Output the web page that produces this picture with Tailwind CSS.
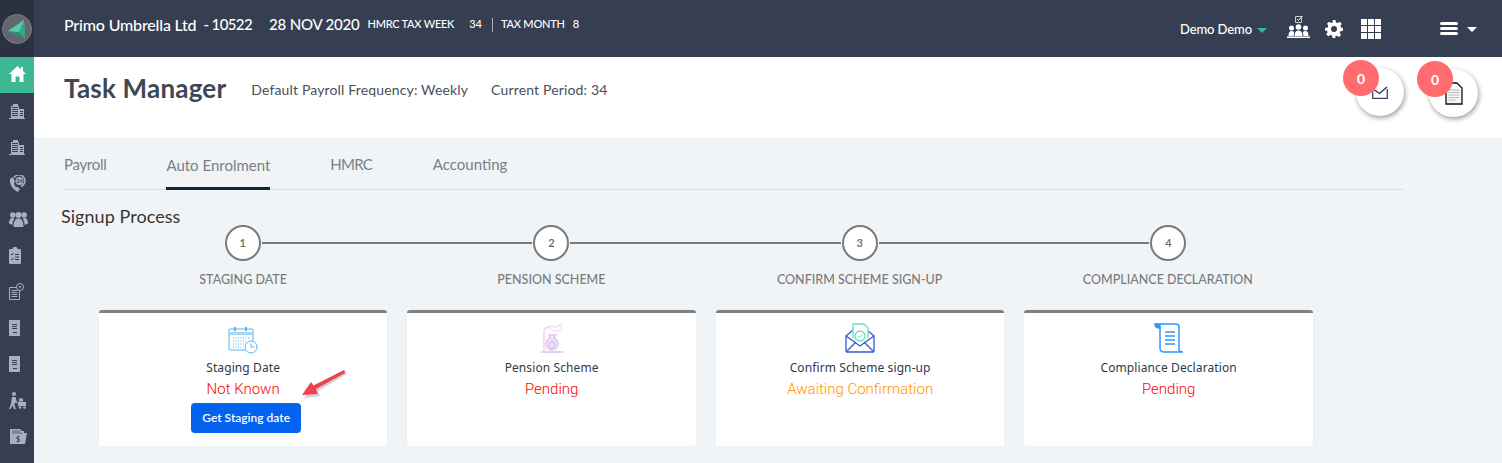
<!DOCTYPE html>
<html lang="en">
<head>
    <meta charset="UTF-8">
    <meta name="viewport" content="width=device-width, initial-scale=1.0">
    <title>Task Manager</title>
    <script src="https://cdn.jsdelivr.net/npm/@tailwindcss/browser@4"></script>
</head>
<body class="bg-[#f0f4f7] font-['Lato',sans-serif] overflow-hidden">
<div class="flex h-[463px] w-[1502px] overflow-hidden">

    <!-- sidebar -->
    <aside class="w-[34px] shrink-0 bg-[#353f51] flex flex-col">
        <div class="w-full h-[57px] bg-[#2a3140] flex items-center justify-center">
            <div class="w-[30px] h-[30px] shrink-0 rounded-full bg-[#62666f] border border-[#7a7d85] flex items-center justify-center">
                <svg width="20" height="20" viewBox="0 0 20 20"><path d="M1 12 L17 1 L18 19 Z" fill="#3fb894"/><path d="M17 1 L12 13 L18 19 Z" fill="#36a587"/><path d="M1 12 L12 13 L18 19 Z" fill="#2a8f75"/><path d="M1 12 L17 1 L12 13 Z" fill="#52cba6"/></svg>
            </div>
        </div>
        <div class="w-full h-[36px] bg-[#3eb795] flex items-center pl-[9px] pb-[2px]">
            <svg width="17" height="16" viewBox="0 0 17 16" fill="#fff"><path d="M8.500 0 L12 3.200 V1 H14 V5 L17 8 H14.500 V16 H10.500 V10.500 H6.500 V16 H2.500 V8 H0 Z"/></svg>
        </div>
        <div class="h-[36px] flex items-center pl-[9px]">
            <svg width="16" height="16" viewBox="0 0 16 16"><path d="M2 15 V3 H4 V1 H9 V3 H10 V6 H15 V15 Z" fill="#a9afbd"/><path d="M3 4.500h6M3 6.500h6M3 8.500h6M3 10.500h6M3 12.500h6M11 8.500h3M11 10.500h3M11 12.500h3" stroke="#353f51"/><path d="M0 15.500h16" stroke="#a9afbd"/></svg>
        </div>
        <div class="h-[36px] flex items-center pl-[9px]">
            <svg width="16" height="16" viewBox="0 0 16 16"><path d="M2 15 V3 H4 V1 H9 V3 H10 V6 H15 V15 Z" fill="#a9afbd"/><path d="M3 4.500h6M3 6.500h6M3 8.500h6M3 10.500h6M3 12.500h6M11 8.500h3M11 10.500h3M11 12.500h3" stroke="#353f51"/><path d="M0 15.500h16" stroke="#a9afbd"/></svg>
        </div>
        <div class="h-[36px] flex items-center pl-[9px]">
            <svg width="17" height="17" viewBox="0 0 17 17" fill="none"><path d="M1 4 C0 9 4 15 9 17 L11 14 L8 11.500 L7 12.500 C6 11 5 9 5 8 L6 7 L4 2 Z" fill="#a9afbd"/><path d="M5 2.500 A6 6 0 1 1 12 11.500" stroke="#a9afbd" stroke-width="1.500"/><circle cx="10.500" cy="6" r="4" fill="#a9afbd"/><text x="10.500" y="8" font-size="5.500" font-weight="700" fill="#353f51" text-anchor="middle">24</text></svg>
        </div>
        <div class="h-[36px] flex items-center pl-[9px]">
            <svg width="19" height="16" viewBox="0 0 19 16" fill="#a9afbd"><circle cx="9.500" cy="4" r="3"/><circle cx="3.800" cy="4" r="2.800"/><circle cx="15.200" cy="4" r="2.800"/><path d="M4.500 16 C4.500 9 7 7.500 9.500 7.500 C12 7.500 14.500 9 14.500 16 Z"/><path d="M0 12.500 C0 8.500 1.500 7 3.500 7 L5.500 7.500 C4 9.500 3.500 11 3.500 14 Z M19 12.500 C19 8.500 17.500 7 15.500 7 L13.500 7.500 C15 9.500 15.500 11 15.500 14 Z"/></svg>
        </div>
        <div class="h-[36px] flex items-center pl-[9px]">
            <svg width="12" height="17" viewBox="0 0 12 17"><path d="M1 2 H3.500 L4.500 0 H7.500 L8.500 2 H11 Q12 2 12 3 V16 Q12 17 11 17 H1 Q0 17 0 16 V3 Q0 2 1 2 Z" fill="#a9afbd"/><path d="M2 7l1 1 1.500-2M2 12l1 1 1.500-2M6 7.500h4M6 10h4M6 12.500h4" stroke="#353f51" fill="none"/></svg>
        </div>
        <div class="h-[37px] flex items-center pl-[9px]">
            <svg width="15" height="17" viewBox="0 0 15 17" fill="none"><path d="M.500 4.500 H10.500 V16.500 H.500 Z" stroke="#a9afbd"/><path d="M2.500 7.500h6M2.500 9.500h6M2.500 11.500h6M2.500 13.500h6" stroke="#a9afbd"/><circle cx="11" cy="4" r="3.500" fill="#353f51" stroke="#a9afbd"/><circle cx="11" cy="4" r="1" fill="#a9afbd"/></svg>
        </div>
        <div class="h-[36px] flex items-center pl-[9px]">
            <svg width="11" height="16" viewBox="0 0 11 16"><path d="M0 0 H11 V16 H0 Z" fill="#a9afbd"/><path d="M3 4.500h5M3 6.500h5M3 8.500h5M4 12.500h4" stroke="#353f51"/></svg>
        </div>
        <div class="h-[36px] flex items-center pl-[9px]">
            <svg width="11" height="16" viewBox="0 0 11 16"><path d="M0 0 H11 V16 H0 Z" fill="#a9afbd"/><path d="M3 4.500h5M3 6.500h5M3 8.500h5M4 12.500h4" stroke="#353f51"/></svg>
        </div>
        <div class="h-[36px] flex items-center pl-[9px]">
            <svg width="17" height="17" viewBox="0 0 17 17" fill="#a9afbd"><circle cx="5" cy="2" r="2"/><path d="M3 5h3.500l1 4 1 1v1.500L6 10.500l-.5 2.500L7 17H5l-1.500-3.500L1.500 17H0l2-5.500z"/><path d="M10 6.500h4v3h-4zM9 10h8v4H9z"/><circle cx="11" cy="15.500" r="1.300"/><circle cx="15.500" cy="15.500" r="1.300"/></svg>
        </div>
        <div class="h-[36px] flex items-center pl-[9px]">
            <svg width="18" height="16" viewBox="0 0 18 16"><path d="M1 1 H11 L13 3 L15 3 L15 5 H18 L16 16 H1 Z" fill="#a9afbd"/><path d="M3 3h8M3 5h10" stroke="#353f51" stroke-width=".7"/><text x="9" y="13.500" font-size="7" font-weight="700" fill="#353f51" text-anchor="middle">$</text></svg>
        </div>
    </aside>

    <div class="flex-1 min-w-0 flex flex-col">
        <!-- top bar -->
        <header class="h-[57px] shrink-0 bg-[#353f51] text-white flex items-center pl-[30px] pb-[8px]">
            <span class="text-[16px] font-medium tracking-[-0.17px] whitespace-pre">Primo Umbrella Ltd</span>
            <span class="ml-[7px] text-[15px] font-medium tracking-[-0.6px] whitespace-pre">- 10522</span>
            <span class="ml-[17px] text-[15px] font-medium tracking-[-0.2px] whitespace-pre">28 NOV 2020</span>
            <span class="ml-[8px] text-[11px] font-medium tracking-[-0.25px] whitespace-pre">HMRC TAX WEEK</span>
            <span class="ml-[15px] text-[11px] font-medium">34</span>
            <span class="ml-[10px] w-px h-[14px] bg-[#aab0bb]"></span>
            <span class="ml-[8px] text-[11px] font-medium tracking-[-0.2px]">TAX MONTH</span>
            <span class="ml-[8px] text-[11px] font-medium">8</span>
            <div class="ml-auto flex items-center pr-[25px] pt-[10px]">
                <span class="text-[13px] font-medium tracking-[-0.1px]">Demo Demo</span>
                <span class="ml-[5px] mt-[2px] w-0 h-0 border-x-[5px] border-x-transparent border-t-[5px] border-t-[#3eb795]"></span>
                <svg class="ml-[20px] -mt-[6px]" width="23" height="23" viewBox="0 0 23 23" fill="#fff"><path d="M8.500 1.500h6v6h-6z" fill="none" stroke="#c9ccd2"/><path d="M10 4l1.500 1.500L15.500 1" fill="none" stroke="#fff"/><circle cx="11.500" cy="12" r="2.800"/><circle cx="4.500" cy="13" r="2.500"/><circle cx="18.500" cy="13" r="2.500"/><path d="M7.500 21q0-5.500 4-5.500t4 5.500zM1.500 21q0-5 3-5t2.500 2l-.500 3zM21.500 21q0-5-3-5t-2.500 2l.500 3zM0 21.500h23V23H0z"/></svg>
                <svg class="ml-[15px] -mt-[2px]" width="18" height="18" viewBox="0 0 24 24" fill="#fff"><path fill-rule="evenodd" d="M10 0h4l.6 3.200 2.300.9L19.600 2.300l2.800 2.800-1.800 2.700.9 2.300L24 10.700v3.600l-3.500.6-.9 2.300 1.800 2.700-2.800 2.800-2.700-1.800-2.300.9L14 24h-4l-.6-3.200-2.300-.9-2.700 1.800-2.800-2.800 1.800-2.700-.9-2.300L0 14.300v-3.600l3.500-.6.9-2.300-1.800-2.700 2.800-2.800 2.700 1.800 2.300-.9zM12 8a4 4 0 1 0 0 8 4 4 0 0 0 0-8z"/></svg>
                <div class="ml-[18px] -mt-[2px] grid grid-cols-3 gap-[1px] w-[20px] h-[20px]">
                    <span class="bg-white"></span><span class="bg-white"></span><span class="bg-white"></span>
                    <span class="bg-white"></span><span class="bg-white"></span><span class="bg-white"></span>
                    <span class="bg-white"></span><span class="bg-white"></span><span class="bg-white"></span>
                </div>
                <div class="ml-[59px] -mt-[3px] flex flex-col gap-[2px] w-[18px]">
                    <span class="h-[3px] bg-white rounded-sm"></span>
                    <span class="h-[3px] bg-white rounded-sm"></span>
                    <span class="h-[3px] bg-white rounded-sm"></span>
                </div>
                <span class="ml-[9px] -mt-[1px] w-0 h-0 border-x-[5px] border-x-transparent border-t-[5px] border-t-white"></span>
            </div>
        </header>

        <!-- page title -->
        <div class="h-[82px] shrink-0 bg-white border-b border-[#e8ebef] flex items-start pl-[30px] pt-[14px]">
            <h1 class="text-[26px] leading-[34px] font-bold text-[#3f4654] tracking-[0.2px]">Task Manager</h1>
            <span class="ml-[25px] mt-[10px] text-[14px] leading-[18px] tracking-[0.15px] text-[#4a4f5a]">Default Payroll Frequency: Weekly</span>
            <span class="ml-[23px] mt-[10px] text-[14px] leading-[18px] tracking-[0.15px] text-[#4a4f5a]">Current Period: 34</span>
            <div class="ml-auto flex pr-[24px] gap-[25px] -mt-[3px]">
                <div class="relative w-[48px] h-[48px] rounded-full bg-white shadow-[1px_2px_5px_rgba(0,0,0,0.4)] flex items-center justify-center">
                    <svg width="16" height="13" viewBox="0 0 16 13" fill="none"><path d="M.700 3v9.300h14.600V3" stroke="#3b4a66" stroke-width="1.300"/><path d="M1 3l6.500 4.500L15 1" stroke="#26324a" stroke-width="1.300"/></svg>
                    <span class="absolute -left-[13px] -top-[8px] w-[36px] h-[36px] rounded-full bg-[#ff6b6e] text-white text-[14px] font-bold flex items-center justify-center">0</span>
                </div>
                <div class="relative mt-[1px] w-[49px] h-[48px] rounded-full bg-white shadow-[1px_2px_5px_rgba(0,0,0,0.4)] flex items-center justify-center">
                    <svg width="18" height="23" viewBox="0 0 18 23" fill="none"><path d="M1 1h11l5 5v16H1z" fill="#f6f6f6" stroke="#111" stroke-width="1.300"/><path d="M3.500 8h11M3.500 10.500h11M3.500 13h11M3.500 15.500h11M3.500 18h7" stroke="#bbb"/></svg>
                    <span class="absolute -left-[12px] -top-[8px] w-[36px] h-[36px] rounded-full bg-[#ff6b6e] text-white text-[14px] font-bold flex items-center justify-center">0</span>
                </div>
            </div>
        </div>

        <!-- tabs -->
        <nav class="ml-[30px] w-[1340px] h-[51px] shrink-0 border-b border-[#dcdfe3] flex text-[15px] text-[#7b7e85]">
            <a class="h-full flex items-center pt-[1px] tracking-[-0.3px]">Payroll</a>
            <a class="ml-[60px] h-[51px] flex items-center pt-[4px] border-b-[3px] border-[#0e2a38] box-border">Auto Enrolment</a>
            <a class="ml-[60px] h-full flex items-center pt-[1px] tracking-[-0.8px]">HMRC</a>
            <a class="ml-[61px] h-full flex items-center pt-[1px]">Accounting</a>
        </nav>

        <!-- signup process -->
        <section class="relative">
            <h2 class="pl-[27px] pt-[15px] h-[35px] text-[18px] leading-[22px] tracking-[0.05px] text-[#3a3430]">Signup Process</h2>
            <div class="ml-[55px] w-[1233px] grid grid-cols-4">
                <div class="flex flex-col items-center">
                    <div class="w-full flex items-center">
                        <span class="flex-1"></span>
                        <span class="w-[36px] h-[36px] rounded-full border-2 border-[#7a7a7a] bg-white text-[11px] font-semibold text-[#666] flex items-center justify-center">1</span>
                        <span class="flex-1 h-[2px] bg-[#7a7a7a] ml-[1px]"></span>
                    </div>
                    <span class="mt-[10px] text-[12.500px] leading-[18px] font-medium text-[#7b7b7b]">STAGING DATE</span>
                </div>
                <div class="flex flex-col items-center">
                    <div class="w-full flex items-center">
                        <span class="flex-1 h-[2px] bg-[#7a7a7a] mr-[1px]"></span>
                        <span class="w-[36px] h-[36px] rounded-full border-2 border-[#7a7a7a] bg-white text-[11px] font-semibold text-[#666] flex items-center justify-center">2</span>
                        <span class="flex-1 h-[2px] bg-[#7a7a7a] ml-[1px]"></span>
                    </div>
                    <span class="mt-[10px] text-[12.500px] leading-[18px] font-medium text-[#7b7b7b]">PENSION SCHEME</span>
                </div>
                <div class="flex flex-col items-center">
                    <div class="w-full flex items-center">
                        <span class="flex-1 h-[2px] bg-[#7a7a7a] mr-[1px]"></span>
                        <span class="w-[36px] h-[36px] rounded-full border-2 border-[#7a7a7a] bg-white text-[11px] font-semibold text-[#666] flex items-center justify-center">3</span>
                        <span class="flex-1 h-[2px] bg-[#7a7a7a] ml-[1px]"></span>
                    </div>
                    <span class="mt-[10px] text-[12.500px] leading-[18px] font-medium text-[#7b7b7b]">CONFIRM SCHEME SIGN-UP</span>
                </div>
                <div class="flex flex-col items-center">
                    <div class="w-full flex items-center">
                        <span class="flex-1 h-[2px] bg-[#7a7a7a] mr-[1px]"></span>
                        <span class="w-[36px] h-[36px] rounded-full border-2 border-[#7a7a7a] bg-white text-[11px] font-semibold text-[#666] flex items-center justify-center">4</span>
                        <span class="flex-1"></span>
                    </div>
                    <span class="mt-[10px] text-[12.500px] leading-[18px] font-medium text-[#7b7b7b]">COMPLIANCE DECLARATION</span>
                </div>
            </div>

            <div class="ml-[64.900px] mt-[21px] w-[1214px] grid grid-cols-4 gap-[20px]">
                <div class="relative h-[136px] bg-white rounded-[3px] border-t-[3px] border-[#808080] flex flex-col items-center pt-[13px] shadow-[0_0_3px_rgba(0,0,0,0.04)]">
                    <svg width="30" height="28" viewBox="0 0 30 28" fill="none" stroke="#5cb0ee"><rect x="1" y="3" width="24" height="21" rx="1"/><path d="M1 7.500h24" stroke-width="3" stroke="#a9d6f6"/><path d="M7 1v4M18 1v4" stroke-width="2"/><path d="M5 12h16M5 15h13M5 18h11M5 21h10" stroke-dasharray="1 1.500"/><circle cx="23" cy="21" r="6" fill="#fff"/><path d="M23 17.500V21h3.500"/></svg>
                    <p class="mt-[5px] font-['Noto_Sans',sans-serif] text-[12px] leading-[18px] tracking-[0.1px] text-[#333a47]">Staging Date</p>
                    <p class="mt-[2px] font-['Roboto',sans-serif] font-light text-[15px] leading-[20px] text-[#ff0000]">Not Known</p>
                    <button class="mt-[4px] ml-[6px] w-[110px] h-[30px] rounded-[4px] bg-[#0362ee] text-white text-[12px] font-semibold">Get Staging date</button>
                    <svg class="absolute left-[200px] top-[56px]" width="50" height="38" viewBox="0 0 50 38" fill="none"><path d="M46 3 L17 20 L19 25 L3 27 L13 14 L15 18 L44 1 Z" fill="#000" fill-opacity=".18" transform="translate(2 2)"/><path d="M45 1 Q47 3 45 4.500 L17 20 L18.500 25 L3 26 L12 13 L14.500 16.500 Z" fill="#ee4250"/></svg>
                </div>
                <div class="h-[136px] bg-white rounded-[3px] border-t-[3px] border-[#808080] flex flex-col items-center pt-[10px] shadow-[0_0_3px_rgba(0,0,0,0.04)]">
                    <svg width="22" height="30" viewBox="0 0 22 30" fill="none" stroke="#dcc3f2" stroke-width="1.300"><path d="M0 29h22" stroke-width="1.600"/><path d="M3 29V9c0-4 2-5 6-5" stroke="#f6dcea" stroke-width="2"/><path d="M9 3l6 1 5-3 1 6-6 1-6-2z" stroke="#f6dcea"/><path d="M8 12h7l-2 3c3 1 4 4 4 6 0 3-2 6-6 6s-6-3-6-6c0-2 1-5 4-6z" fill="#efe3fa"/><circle cx="11" cy="22" r="3"/></svg>
                    <p class="mt-[6px] font-['Noto_Sans',sans-serif] text-[12px] leading-[18px] tracking-[0.1px] text-[#333a47]">Pension Scheme</p>
                    <p class="mt-[2px] font-['Roboto',sans-serif] font-light text-[15px] leading-[20px] text-[#ff0000]">Pending</p>
                </div>
                <div class="h-[136px] bg-white rounded-[3px] border-t-[3px] border-[#808080] flex flex-col items-center pt-[10px] shadow-[0_0_3px_rgba(0,0,0,0.04)]">
                    <svg width="30" height="30" viewBox="0 0 30 30" fill="none"><path d="M1 13 L8 7 M29 13 L22 7 M1 13 V28 Q1 29 2 29 H28 Q29 29 29 28 V13 L15 23 Z M2 28 L11 19 M28 28 L19 19" stroke="#2f5fd6" stroke-width="1.300"/><path d="M8 15V1h11l4 4v10" fill="#fff" stroke="#66e0c9" stroke-width="1.300"/><circle cx="15" cy="13" r="5" stroke="#66e0c9" stroke-width="1.300"/><path d="M13 13l1.500 1.500L17 12" stroke="#66e0c9"/></svg>
                    <p class="mt-[6px] font-['Noto_Sans',sans-serif] text-[12px] leading-[18px] tracking-[0.1px] text-[#333a47]">Confirm Scheme sign-up</p>
                    <p class="mt-[2px] font-['Roboto',sans-serif] font-light text-[15px] leading-[20px] text-[#ff9500]">Awaiting Confirmation</p>
                </div>
                <div class="h-[136px] bg-white rounded-[3px] border-t-[3px] border-[#808080] flex flex-col items-center pt-[10px] shadow-[0_0_3px_rgba(0,0,0,0.04)]">
                    <svg width="30" height="30" viewBox="0 0 30 30" fill="none" stroke="#2f96ff" stroke-width="1.500"><path d="M3 1h19q3 0 3 3v22q0 3 4 3H10q-4 0-4-4V5q0-4-5-4z"/><path d="M1 1q0 4 5 4V2z" fill="#2f96ff"/><path d="M11 9h10M11 13h10M11 17h10M11 21h10"/></svg>
                    <p class="mt-[6px] font-['Noto_Sans',sans-serif] text-[12px] leading-[18px] tracking-[0.1px] text-[#333a47]">Compliance Declaration</p>
                    <p class="mt-[2px] font-['Roboto',sans-serif] font-light text-[15px] leading-[20px] text-[#ff0000]">Pending</p>
                </div>
            </div>
        </section>
    </div>
</div>
</body>
</html>
